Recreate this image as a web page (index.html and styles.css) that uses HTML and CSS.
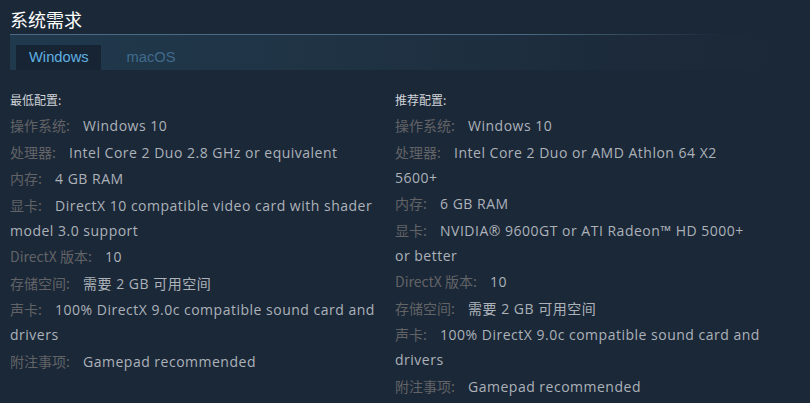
FILE: index.html
```html
<!DOCTYPE html>
<html lang="zh-CN">
<head>
<meta charset="utf-8">
<link rel="stylesheet" href="styles.css">
</head>
<body>
<div class="sysreq">
  <h2 class="title">系统需求</h2>
  <div class="tabs">
    <div class="tab active">Windows</div>
    <div class="tab">macOS</div>
  </div>
  <div class="cols">
    <div class="col left">
      <div class="head">最低配置:</div>
      <ul>
        <li><span class="lbl">操作系统:</span> Windows 10</li>
        <li><span class="lbl">处理器:</span> Intel Core 2 Duo 2.8 GHz or equivalent</li>
        <li><span class="lbl">内存:</span> 4 GB RAM</li>
        <li><span class="lbl">显卡:</span> DirectX 10 compatible video card with shader model 3.0 support</li>
        <li><span class="lbl">DirectX 版本:</span> 10</li>
        <li><span class="lbl">存储空间:</span> 需要 2 GB 可用空间</li>
        <li><span class="lbl">声卡:</span> 100% DirectX 9.0c compatible sound card and drivers</li>
        <li><span class="lbl">附注事项:</span> Gamepad recommended</li>
      </ul>
    </div>
    <div class="col right">
      <div class="head">推荐配置:</div>
      <ul>
        <li><span class="lbl">操作系统:</span> Windows 10</li>
        <li><span class="lbl">处理器:</span> Intel Core 2 Duo or AMD Athlon 64 X2 5600+</li>
        <li><span class="lbl">内存:</span> 6 GB RAM</li>
        <li><span class="lbl">显卡:</span> NVIDIA® 9600GT or ATI Radeon™ HD 5000+ or better</li>
        <li><span class="lbl">DirectX 版本:</span> 10</li>
        <li><span class="lbl">存储空间:</span> 需要 2 GB 可用空间</li>
        <li><span class="lbl">声卡:</span> 100% DirectX 9.0c compatible sound card and drivers</li>
        <li><span class="lbl">附注事项:</span> Gamepad recommended</li>
      </ul>
    </div>
  </div>
</div>
</body>
</html>
```
FILE: styles.css
```css
html, body {
  margin: 0;
  padding: 0;
  background: #1b2838;
}
body {
  font-family: "Open Sans", "Noto Sans CJK SC", sans-serif;
  color: #acb2b8;
}
.sysreq {
  padding: 0 10px;
}
.title {
  margin: 0;
  padding-top: 7px;
  height: 27px;
  font-size: 18px;
  font-weight: normal;
  line-height: 24px;
  color: #ffffff;
  font-family: "Noto Sans CJK SC", sans-serif;
}
.tabs {
  display: flex;
  align-items: flex-end;
  height: 35px;
  padding-left: 6px;
  border-top: 1px solid transparent;
  border-image: linear-gradient(90deg, #4a6b83 0%, #4a6b83 65%, rgba(74,107,131,0) 90%) 1;
  background: linear-gradient(90deg, #20394d 0%, #1f3344 40%, #1c2a3a 80%, #1b2838 100%);
  margin-bottom: 21px;
}
.tab {
  height: 25px;
  line-height: 25px;
  font-size: 14.7px;
  padding: 0 12px 0 13px;
  color: #3f6b8c;
  font-family: "Liberation Sans", sans-serif;
}
.tab.active {
  background: #172433;
  color: #5fb0e2;
  margin-right: 13px;
}
.cols {
  display: flex;
}
.col {
  width: 385px;
  flex: none;
}
.head {
  font-size: 12px;
  line-height: 18px;
  color: #cfd3d7;
  margin-bottom: 4px;
  font-family: "Noto Sans CJK SC", sans-serif;
}
ul {
  list-style: none;
  margin: 0;
  padding: 0 19px 0 0;
}
li {
  font-size: 14px;
  line-height: 25px;
  margin-bottom: 1.5px;
  letter-spacing: 0.5px;
}
.lbl {
  color: #626366;
  letter-spacing: 0;
  margin-right: 9px;
  font-family: "Noto Sans CJK SC", sans-serif;
}
```
